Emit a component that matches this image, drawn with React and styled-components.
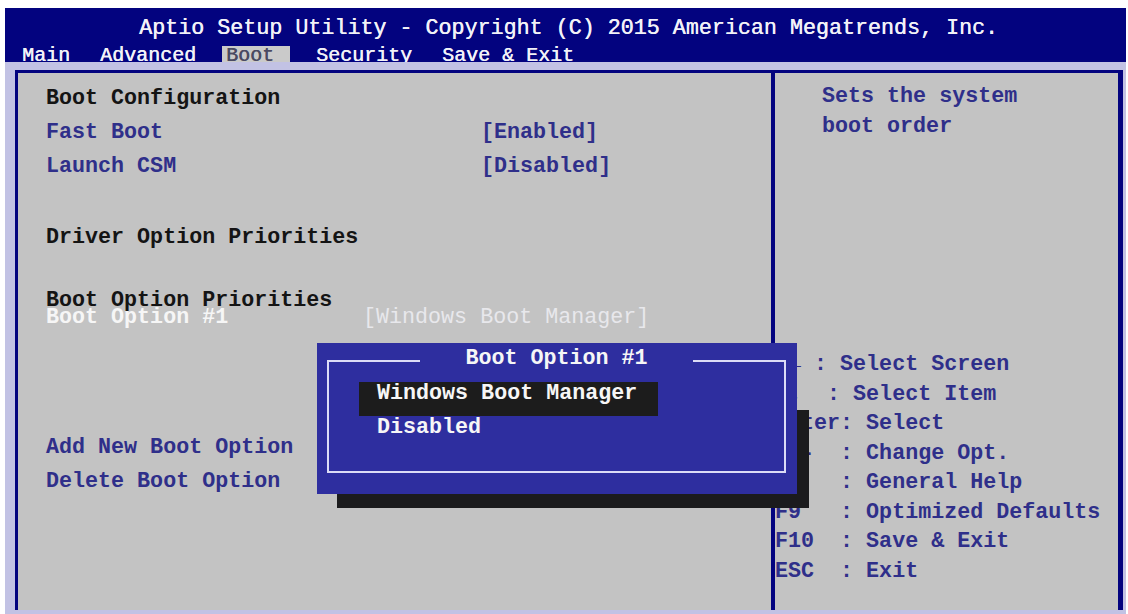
import React from "react";
import styled, { createGlobalStyle } from "styled-components";

const mono = `"Liberation Mono", "DejaVu Sans Mono", monospace`;
const navy = "#03037f";
const lavender = "#c2c2e4";
const gray = "#c3c3c3";
const ink = "#2f2f8a";

const GlobalStyle = createGlobalStyle`
  html, body {
    margin: 0;
    padding: 0;
    background: #ffffff;
    overflow: hidden;
  }
  * {
    box-sizing: border-box;
  }
`;

// Settings rows on the left
const rows = [
  { label: "Boot Configuration", kind: "heading" },
  { label: "Fast Boot", value: "[Enabled]", kind: "item" },
  { label: "Launch CSM", value: "[Disabled]", kind: "item" },
  { label: "Driver Option Priorities", kind: "heading", mt: 37 },
  { label: "Boot Option Priorities", kind: "heading", mt: 37, h: 17 },
  { label: "Boot Option #1", value: "[Windows Boot Manager]", kind: "selected", h: 17, labelWidth: 317 },
  { label: "Add New Boot Option", kind: "item", mt: 105 },
  { label: "Delete Boot Option", kind: "item" },
];

const keys = [
  "→← : Select Screen",
  "↑↓  : Select Item",
  "Enter: Select",
  "+/-  : Change Opt.",
  "F1   : General Help",
  "F9   : Optimized Defaults",
  "F10  : Save & Exit",
  "ESC  : Exit",
];

const tabs = ["Main", "Advanced", "Boot", "Security", "Save & Exit"];
const options = ["Windows Boot Manager", "Disabled"];

const App = () => {
  return (
    <Page>
      <GlobalStyle />
      <Screen>
        <Header>
          <Title>Aptio Setup Utility - Copyright (C) 2015 American Megatrends, Inc.</Title>
          <Tabs>
            {tabs.map((tab) => (
              <Tab key={tab} $active={tab === "Boot"}>
                {tab}
              </Tab>
            ))}
          </Tabs>
        </Header>
        <Body>
          <Frame>
            <LeftPane>
              {rows.map((row) => (
                <Row
                  key={row.label}
                  $mt={row.mt || 0}
                  $h={row.h || 34}
                  $labelWidth={row.labelWidth || 435}
                  $kind={row.kind}
                >
                  <span>{row.label}</span>
                  <Value $kind={row.kind}>{row.value}</Value>
                </Row>
              ))}
            </LeftPane>
            <RightPane>
              <HelpText>
                <div>Sets the system</div>
                <div>boot order</div>
              </HelpText>
              <KeyList>
                {keys.map((k) => (
                  <div key={k}>{k}</div>
                ))}
              </KeyList>
            </RightPane>
          </Frame>
        </Body>
      </Screen>

      {/* Popup dialog over the settings */}
      <Shadow />
      <Popup>
        <PopupFrame>
          <Legend>
            <span>Boot Option #1</span>
          </Legend>
          <OptionList>
            {options.map((opt, i) => (
              <Option key={opt} $active={i === 0}>
                {opt}
              </Option>
            ))}
          </OptionList>
        </PopupFrame>
      </Popup>
    </Page>
  );
};

// Styled Components
const Page = styled.div`
  position: relative;
  width: 1128px;
  height: 614px;
  overflow: hidden;
  padding: 8px 2px 0 5px;
  font-family: ${mono};
`;

const Screen = styled.div`
  height: 606px;
  background: ${lavender};
  display: flex;
  flex-direction: column;
`;

const Header = styled.div`
  height: 54px;
  flex-shrink: 0;
  background: ${navy};
  overflow: hidden;
  padding-top: 4px;
`;

const Title = styled.div`
  height: 34px;
  line-height: 34px;
  text-align: center;
  padding-left: 6px;
  color: #f2f2f8;
  font-size: 21.7px;
  white-space: pre;
  text-shadow: 0.4px 0 0 #f2f2f8;
`;

const Tabs = styled.div`
  display: flex;
  gap: 22px;
  padding-left: 13px;
`;

const Tab = styled.div`
  padding: ${(p) => (p.$active ? "0 16px 0 4px" : "0 4px")};
  line-height: 20px;
  font-size: 20px;
  white-space: pre;
  color: ${(p) => (p.$active ? "#4a4a62" : "#f2f2f8")};
  background: ${(p) => (p.$active ? "#cacaca" : "transparent")};
  text-shadow: 0.4px 0 0 currentColor;
`;

const Body = styled.div`
  flex: 1;
  padding: 8px 3px 4px 10px;
`;

const Frame = styled.div`
  height: 100%;
  background: ${gray};
  border-top: 3px solid ${navy};
  border-left: 3px solid ${navy};
  border-right: 5px solid ${navy};
  display: grid;
  grid-template-columns: 753px 1fr;
`;

const LeftPane = styled.div`
  padding: 9px 0 0 28px;
`;

const Row = styled.div`
  display: grid;
  grid-template-columns: ${(p) => p.$labelWidth}px auto;
  height: ${(p) => p.$h}px;
  line-height: ${(p) => p.$h}px;
  margin-top: ${(p) => p.$mt}px;
  font-size: 21.7px;
  font-weight: bold;
  white-space: pre;
  color: ${(p) =>
    p.$kind === "heading" ? "#141414" : p.$kind === "selected" ? "#f6f6f6" : ink};
`;

const Value = styled.span`
  color: ${(p) => (p.$kind === "selected" ? "#e8e8ec" : ink)};
  font-weight: ${(p) => (p.$kind === "selected" ? "normal" : "bold")};
`;

const RightPane = styled.div`
  border-left: 4px solid ${navy};
  padding-top: 9px;
  font-size: 21.7px;
  font-weight: bold;
  color: ${ink};
  white-space: pre;
`;

const HelpText = styled.div`
  padding-left: 47px;
  line-height: 30px;
`;

const KeyList = styled.div`
  margin-top: 208px;
  line-height: 29.5px;
`;

const Shadow = styled.div`
  position: absolute;
  left: 337px;
  top: 410px;
  width: 472px;
  height: 98px;
  background: #1b1b1d;
`;

const Popup = styled.div`
  position: absolute;
  left: 317px;
  top: 343px;
  width: 480px;
  height: 151px;
  background: #2e2e9f;
  padding: 17px 11px 21px 10px;
`;

const PopupFrame = styled.div`
  position: relative;
  height: 100%;
  border: 2px solid #dcdcf6;
`;

const Legend = styled.div`
  position: absolute;
  top: -18px;
  left: 0;
  right: 0;
  text-align: center;
  line-height: 30px;
  font-size: 21.7px;
  font-weight: bold;
  color: #f6f6f6;

  span {
    background: #2e2e9f;
    padding: 0 45px;
    white-space: pre;
  }
`;

const OptionList = styled.div`
  padding: 20px 0 0 30px;
`;

const Option = styled.div`
  width: 299px;
  height: 34px;
  line-height: 24px;
  padding-left: 18px;
  font-size: 21.7px;
  font-weight: bold;
  white-space: pre;
  color: #f6f6f6;
  background: ${(p) => (p.$active ? "#1c1c1c" : "transparent")};
`;

export default App;
